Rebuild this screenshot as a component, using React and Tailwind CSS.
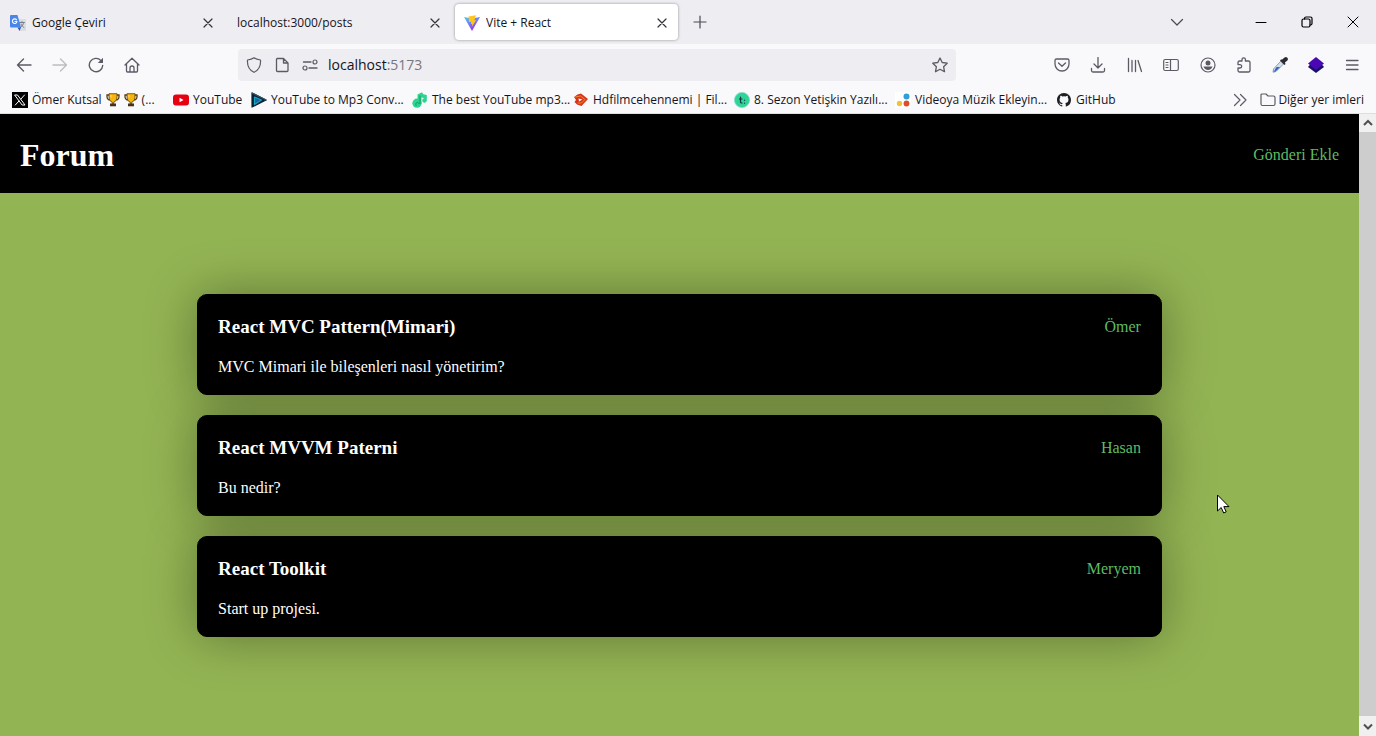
import React from "react";

const Svg = ({ children, size = 16, className = "", box = 16 }) => (
  <svg
    width={size}
    height={size}
    viewBox={`0 0 ${box} ${box}`}
    fill="none"
    stroke="currentColor"
    strokeWidth="1.2"
    strokeLinecap="round"
    strokeLinejoin="round"
    aria-hidden="true"
    className={`shrink-0 ${className}`}
  >
    {children}
  </svg>
);

const Close = () => (
  <Svg><path d="M4 4l8 8M12 4l-8 8" /></Svg>
);

const TranslateLogo = () => (
  <Svg>
    <path d="M6 4h9a1 1 0 011 1v10a1 1 0 01-1 1H9.500z" fill="#dcdde0" stroke="none" />
    <path d="M9.500 7.500h5M12 6.500v1M10.500 12.500c2-1.500 3-3 3-5M11 9c.5 1.500 1.700 2.700 3 3.500" stroke="#75808c" strokeWidth="1" />
    <path d="M1 0h6.500L11 12.500H1a1 1 0 01-1-1V1a1 1 0 011-1z" fill="#4a86e8" stroke="none" />
    <path d="M7.500 12.500H11L9.500 16z" fill="#2b58b8" stroke="none" />
    <path d="M6.600 4.800A2.300 2.300 0 107 6.500H5" stroke="#fff" strokeWidth="1.100" />
  </Svg>
);

const ViteLogo = () => (
  <Svg>
    <defs>
      <linearGradient id="vite" x1="0" y1="0" x2="0.600" y2="1">
        <stop offset="0" stopColor="#41d1ff" />
        <stop offset="1" stopColor="#a02bea" />
      </linearGradient>
    </defs>
    <path d="M0 2l8 14L16 2 8 3.500z" fill="url(#vite)" stroke="none" />
    <path d="M12 .3L4.500 1.500l.5 5.500 2.200-.3-.4 2.300 1.400-.3-.3 3 4.300-6.700-1.900.2z" fill="#ffc51f" stroke="none" />
  </Svg>
);

const XLogo = () => (
  <Svg>
    <path d="M0 0h16v16H0z" fill="#000" stroke="none" />
    <path d="M3 3h2.500L13 13h-2.500zM12.500 3L9 7M7 9l-3.700 4" stroke="#fff" strokeWidth="1" />
  </Svg>
);

const Trophy = () => (
  <svg width="14" height="14" viewBox="0 0 14 14" aria-hidden="true" className="shrink-0">
    <path d="M3.500 2H1v1.500C1 6 2.500 7 4.500 7M10.500 2H13v1.500C13 6 11.500 7 9.500 7" fill="none" stroke="#5a3d0c" strokeWidth="1.300" />
    <path d="M3 .7h8V4c0 3-1.500 4.500-3.200 5v1.500H6.200V9C4.500 8.500 3 7 3 4z" fill="#f6b40e" stroke="#5a3d0c" strokeWidth=".8" />
    <path d="M4 10.500h6v2.800H4z" fill="#4b3217" />
    <path d="M5 2v2.500" stroke="#ffe38a" />
  </svg>
);

const YouTubeLogo = () => (
  <Svg>
    <rect y="2.500" width="16" height="11" rx="3" fill="#e60012" stroke="none" />
    <path d="M6.500 5.700v4.600l4-2.300z" fill="#fff" stroke="none" />
  </Svg>
);

const PlayLogo = () => (
  <Svg>
    <path d="M1 1l14 7L1 15z" fill="#0b2230" stroke="#0b2230" />
    <path d="M3.500 5l7 3-7 4.500z" fill="#1464a5" stroke="#16a3c7" />
    <path d="M1 1l14 7" stroke="#33536a" />
  </Svg>
);

const NoteLogo = () => (
  <Svg>
    <path d="M5.500 2.500L10 .3l1.200 2L14.800 3v5.500a2.300 2.300 0 11-3-2.300V6l-2.300-.5v6.300L5.500 9z" fill="#2bd48f" stroke="none" />
    <circle cx="5" cy="11.200" r="4.600" fill="#2bd48f" stroke="none" />
    <path d="M8 4v7.500M4 13.300c-1-3 2.500-4 3-1.500" stroke="#178b64" strokeWidth=".9" />
  </Svg>
);

const FilmLogo = () => (
  <Svg>
    <path d="M1 5l3.500-2.500L8 1.500 15 7l-6.500 7L4 12.500 1.500 10 3 8z" fill="#d5341d" stroke="none" />
    <path d="M2.500 5L7.500 4l4.500 3.500L8.500 11H5" stroke="#f28c28" strokeWidth="1" />
    <path d="M5.500 6.500L9.500 7.500 6 9.500z" fill="#fff" stroke="none" />
  </Svg>
);

const SezonLogo = () => (
  <Svg>
    <circle cx="8" cy="8" r="7.600" fill="#2fd594" stroke="#86d8d4" strokeWidth=".8" />
    <path d="M6.500 5v5q0 1 1.500 1M5.500 7h2.500M10.500 8v.2M10.500 11v.2" stroke="#17324a" />
  </Svg>
);

const DotsLogo = () => (
  <Svg>
    <path d="M0 0h16v16H0z" fill="#fff" stroke="none" />
    <circle cx="11.500" cy="4.500" r="3" fill="#2f9fd8" stroke="none" />
    <circle cx="4.500" cy="11.500" r="2.700" fill="#f2c230" stroke="none" />
    <circle cx="11.500" cy="11.500" r="2.900" fill="#e04b2a" stroke="none" />
  </Svg>
);

const GitHubLogo = () => (
  <Svg>
    <path fill="#1b1f23" stroke="none" d="M8 1C4.100 1 1 4.100 1 8c0 3.100 2 5.700 4.800 6.600.35.070.48-.15.480-.33v-1.200c-1.950.42-2.360-.94-2.360-.94-.32-.81-.78-1.020-.78-1.020-.63-.43.050-.42.050-.42.700.050 1.070.720 1.070.720.620 1.070 1.640.760 2.040.580.060-.45.240-.76.440-.93-1.550-.18-3.190-.78-3.190-3.460 0-.77.270-1.390.720-1.880-.070-.18-.31-.89.070-1.860 0 0 .59-.19 1.930.72a6.700 6.700 0 013.500 0c1.340-.91 1.930-.72 1.930-.72.380.97.140 1.680.070 1.860.45.490.720 1.110.720 1.880 0 2.690-1.640 3.280-3.200 3.450.25.220.48.640.48 1.300v1.920c0 .180.130.400.480.330A7 7 0 0015 8c0-3.900-3.100-7-7-7z" />
  </Svg>
);

const tabs = [
  { title: "Google Çeviri", icon: <TranslateLogo /> },
  { title: "localhost:3000/posts" },
  { title: "Vite + React", icon: <ViteLogo />, active: true },
];

const bookmarks = [
  { label: <>Ömer Kutsal <Trophy /> <Trophy /> (...</>, icon: <XLogo />, width: "w-[161px]" },
  { label: "YouTube", icon: <YouTubeLogo />, width: "w-[78px]" },
  { label: "YouTube to Mp3 Conv...", icon: <PlayLogo />, width: "w-[161px]" },
  { label: "The best YouTube mp3...", icon: <NoteLogo />, width: "w-[161px]" },
  { label: "Hdfilmcehennemi | Fil...", icon: <FilmLogo />, width: "w-[161px]" },
  { label: "8. Sezon Yetişkin Yazılı...", icon: <SezonLogo />, width: "w-[161px]" },
  { label: "Videoya Müzik Ekleyin...", icon: <DotsLogo />, width: "w-[161px]" },
  { label: "GitHub", icon: <GitHubLogo />, width: "w-[70px]" },
];

const posts = [
  { title: "React MVC Pattern(Mimari)", text: "MVC Mimari ile bileşenleri nasıl yönetirim?", user: "Ömer" },
  { title: "React MVVM Paterni", text: "Bu nedir?", user: "Hasan" },
  { title: "React Toolkit", text: "Start up projesi.", user: "Meryem" },
];

function IconButton({ label, children, className = "" }) {
  return (
    <button type="button" aria-label={label} className={`flex h-8 items-center justify-center ${className}`}>
      {children}
    </button>
  );
}

function TabBar() {
  return (
    <div className="flex h-11 items-center bg-[#eeedf2]">
      <div role="tablist" className="flex min-w-0 items-center gap-1 pl-px">
        {tabs.map((tab) => (
          <div
            key={tab.title}
            className={`flex h-9 w-[223px] items-center rounded pt-0.5 pr-2 pl-[9px] ${tab.active ? "bg-white shadow-[0_0_3px_rgba(0,0,0,0.4)]" : ""}`}
          >
            <button type="button" role="tab" aria-selected={!!tab.active} className="flex min-w-0 flex-1 items-center gap-1.5 text-left">
              {tab.icon}
              <span className="truncate">{tab.title}</span>
            </button>
            <button type="button" aria-label={`Kapat: ${tab.title}`} className="shrink-0 text-[#33333b]"><Close /></button>
          </div>
        ))}
      </div>
      <IconButton label="Yeni sekme" className="ml-1.5 w-8 text-[#4a4a54]">
        <Svg><path d="M8 2v12M2 8h12" /></Svg>
      </IconButton>
      <div className="ml-auto flex items-center">
        <IconButton label="Sekmeleri listele" className="mr-9 w-[50px] text-[#4a4a54]"><Svg><path d="M2.500 5.500L8 11l5.500-5.500" /></Svg></IconButton>
        <IconButton label="Simge durumuna küçült" className="w-[46px] text-black"><Svg><path d="M3 8.500h10" strokeWidth="1" /></Svg></IconButton>
        <IconButton label="Önceki boyut" className="w-[46px] text-black">
          <Svg><rect x="3" y="5" width="8" height="8" rx="1.500" /><path d="M5.500 5V4.500a1.500 1.500 0 011.500-1.500h4.500A1.500 1.500 0 0113 4.500V9.500a1.500 1.500 0 01-1.500 1.500H11" /></Svg>
        </IconButton>
        <IconButton label="Kapat" className="w-[46px] text-black"><Svg><path d="M3 3l10 10M13 3L3 13" strokeWidth="1" /></Svg></IconButton>
      </div>
    </div>
  );
}

function Toolbar() {
  return (
    <div className="flex h-[42px] items-center bg-[#f9f9fb] pr-1.5 text-[#5b5b66]">
      <div className="flex pl-1.5">
        <IconButton label="Geri" className="w-9"><Svg><path d="M15 8H1.500M7.500 2L1.500 8l6 6" strokeWidth="1.400" /></Svg></IconButton>
        <IconButton label="İleri" className="w-9 text-[#bcbcc2]"><Svg><path d="M1 8h13.500M8.500 2l6 6-6 6" strokeWidth="1.400" /></Svg></IconButton>
        <IconButton label="Yenile" className="w-9"><Svg><path d="M13 3.600A6.700 6.700 0 1014.700 8.500" strokeWidth="1.400" /><path d="M15 .8v5.200H9.800z" fill="currentColor" stroke="none" /></Svg></IconButton>
        <IconButton label="Ana sayfa" className="w-9"><Svg><path d="M1 8l7-6.800L15 8M2.500 7v7a1 1 0 001 1h9a1 1 0 001-1V7M6 14.500V11a2 2 0 014 0v3.500" strokeWidth="1.300" /></Svg></IconButton>
      </div>
      <div className="mr-[88px] ml-[88px] flex h-8 flex-1 items-center gap-3 rounded bg-[#eeedf2] px-2">
        <Svg><path d="M8 .8c2 1.600 4.400 2 6.500 2.200.4 5.500-1.500 10-6.500 12.300C3 13 1.100 8.500 1.500 3 3.600 2.800 6 2.400 8 .8z" /></Svg>
        <Svg><path d="M3 1.500h6.500L14 6v7.500a1 1 0 01-1 1H3.500a1 1 0 01-1-1V2.500a1 1 0 01.5-1zM9.500 1.500V6H14" strokeWidth="1.300" /></Svg>
        <Svg><circle cx="13" cy="5" r="2" /><circle cx="3" cy="11" r="2" /><path d="M1.500 5H9M7 11h8" strokeWidth="1.400" /></Svg>
        <label className="relative -ml-0.5 flex h-8 flex-1 items-center text-sm">
          <span aria-hidden="true" className="pointer-events-none absolute left-0 text-[#77777f]"><span className="text-[#15141a]">localhost</span>:5173</span>
          <input aria-label="Adres" defaultValue="localhost:5173" className="w-full bg-transparent text-transparent outline-none" />
        </label>
        <button type="button" aria-label="Yer imlerine ekle"><Svg><path d="M8 1l2.200 4.500 5 .7-3.600 3.500.9 5L8 12.300l-4.500 2.400.9-5L.8 6.200l5-.7z" strokeWidth="1.300" /></Svg></button>
      </div>
      <div className="flex">
        <IconButton label="Pocket" className="w-9"><Svg><path d="M2.500 2h11A1.500 1.500 0 0115 3.500V7A7 7 0 011 7V3.500A1.500 1.500 0 012.500 2zM4.500 6L8 9.200 11.500 6" strokeWidth="1.300" /></Svg></IconButton>
        <IconButton label="İndirmeler" className="w-9"><Svg><path d="M8 .5v10M4 7l4 4 4-4M1.500 11.500v2a1.500 1.500 0 001.500 1.500h10a1.500 1.500 0 001.500-1.500v-2" strokeWidth="1.300" /></Svg></IconButton>
        <IconButton label="Kütüphane" className="w-[37px]"><Svg><path d="M1.500 1.500v13M5 3.500v11M8.500 3.500v11M11 3.500l3.500 11" strokeWidth="1.300" /></Svg></IconButton>
        <IconButton label="Kenar çubuğu" className="w-9"><Svg><rect x=".7" y="2.500" width="14.600" height="11" rx="1.500" /><path d="M7.500 2.500v11M3 5.500h2M3 8h2M3 10.500h2" /></Svg></IconButton>
        <IconButton label="Hesap" className="w-[37px]"><Svg><circle cx="8" cy="8" r="7" /><circle cx="8" cy="6" r="2.500" fill="currentColor" stroke="none" /><path d="M3.500 9.500h9A5 5 0 018 13a5 5 0 01-4.500-3.500z" fill="currentColor" stroke="none" /></Svg></IconButton>
        <IconButton label="Uzantılar" className="w-9"><Svg><path d="M2 5.500A1.500 1.500 0 013.500 4H6V2.500a1.700 1.700 0 013.400 0V4h3.100A1.500 1.500 0 0114 5.500v8a1.500 1.500 0 01-1.500 1.500h-9A1.500 1.500 0 012 13.500V11h2a1.700 1.700 0 000-3.400H2z" strokeWidth="1.300" /></Svg></IconButton>
        <IconButton label="Renk seçici" className="w-9"><Svg><path d="M9 4.500l2.500 2.500L4 14.500l-3 .7.500-2.800z" fill="#cfe0f2" stroke="#71829a" strokeWidth=".8" /><path d="M4.500 10H8l-4 4-2.500 1z" fill="#3563c8" stroke="none" /><path d="M8 3.500l4.500 4.500 1-1-.6-1.600 2.200-1.700A1.900 1.900 0 0012.500.6L10.200 2.600 9 2.500z" fill="#2a2a30" stroke="none" /></Svg></IconButton>
        <IconButton label="Katmanlar" className="w-9"><Svg><path d="M2.500 7h11l2.500 3-8 6-8-6z" fill="#18106b" stroke="none" /><path d="M8 0l8 6.500L8 13 0 6.500z" fill="#4a08b5" stroke="none" /></Svg></IconButton>
        <IconButton label="Menü" className="w-9"><Svg><path d="M2.500 3.500h11.500M2.500 8h11.500M2.500 12.500h11.500" strokeWidth="1.300" /></Svg></IconButton>
      </div>
    </div>
  );
}

function BookmarksBar() {
  return (
    <nav aria-label="Yer imleri" className="flex h-7 items-center border-b border-[#dededf] bg-[#f9f9fb] pr-3 pl-3">
      {bookmarks.map((b, i) => (
        <a key={i} href="#" className={`flex shrink-0 items-center gap-1 whitespace-nowrap ${b.width}`}>
          {b.icon}
          <span className="flex items-center gap-1">{b.label}</span>
        </a>
      ))}
      <div className="ml-auto flex items-center gap-3">
        <button type="button" aria-label="Diğer araçlar" className="text-[#5b5b66]"><Svg><path d="M2.500 2.500L8 8l-5.500 5.500M8.500 2.500L14 8l-5.500 5.500" /></Svg></button>
        <button type="button" className="flex items-center gap-0.5 whitespace-nowrap">
          <Svg className="text-[#5b5b66]"><path d="M2 2h4l2 2h5.500A1.500 1.500 0 0115 5.500V12a1.500 1.500 0 01-1.500 1.500h-11A1.500 1.500 0 011 12V3a1 1 0 011-1z" /></Svg>
          Diğer yer imleri
        </button>
      </div>
    </nav>
  );
}

function Post({ title, text, user }) {
  return (
    <article className="flex flex-col gap-[18px] rounded-[10px] border border-black bg-black px-5 pt-5 pb-[17px] text-white shadow-[0_0_50px_rgba(0,0,0,0.35)]">
      <div className="flex items-center justify-between">
        <h2 className="text-[19px] leading-6 font-bold">{title}</h2>
        <span className="text-[#5dbb63]">{user}</span>
      </div>
      <p className="leading-5">{text}</p>
    </article>
  );
}

export default function App() {
  return (
    <div className="flex h-screen flex-col overflow-hidden">
      <header className="shrink-0 font-['Open_Sans','Noto_Sans',sans-serif] text-xs text-[#15141a]">
        <TabBar />
        <Toolbar />
        <BookmarksBar />
      </header>
      <div className="relative flex min-h-0 flex-1 font-['Liberation_Serif',serif] text-base">
        <div className="min-w-0 flex-1 overflow-hidden bg-[#93b453]">
          <header className="flex items-center justify-between bg-black px-5 pt-[21px] pb-[18px]">
            <h1 className="text-[32px] leading-10 font-bold text-white">Forum</h1>
            <a href="#" className="text-[#5dbb63]">Gönderi Ekle</a>
          </header>
          <main className="mx-auto mt-[101px] flex w-[71%] flex-col gap-5">
            {posts.map((post) => <Post key={post.user} {...post} />)}
          </main>
        </div>
        <div aria-hidden="true" className="flex w-[17px] flex-col items-center bg-[#f0f0f0] text-[#505050]">
          <Svg className="my-px"><path d="M4 10l4-4 4 4" strokeWidth="2" strokeLinecap="butt" strokeLinejoin="miter" /></Svg>
          <div className="w-full flex-1 bg-[#cdcdcd]" />
          <Svg className="my-0.5"><path d="M4 6.500l4 4 4-4" strokeWidth="2" strokeLinecap="butt" strokeLinejoin="miter" /></Svg>
        </div>
        <svg width="14" height="22" viewBox="0 0 14 22" aria-hidden="true" className="absolute top-[380px] left-[1216px]">
          <path d="M1.500 1v16l3.700-3.500L7.700 19l2.500-1.100-2.400-5.300h5.200z" fill="#fff" stroke="#000" strokeWidth="1" />
        </svg>
      </div>
    </div>
  );
}
